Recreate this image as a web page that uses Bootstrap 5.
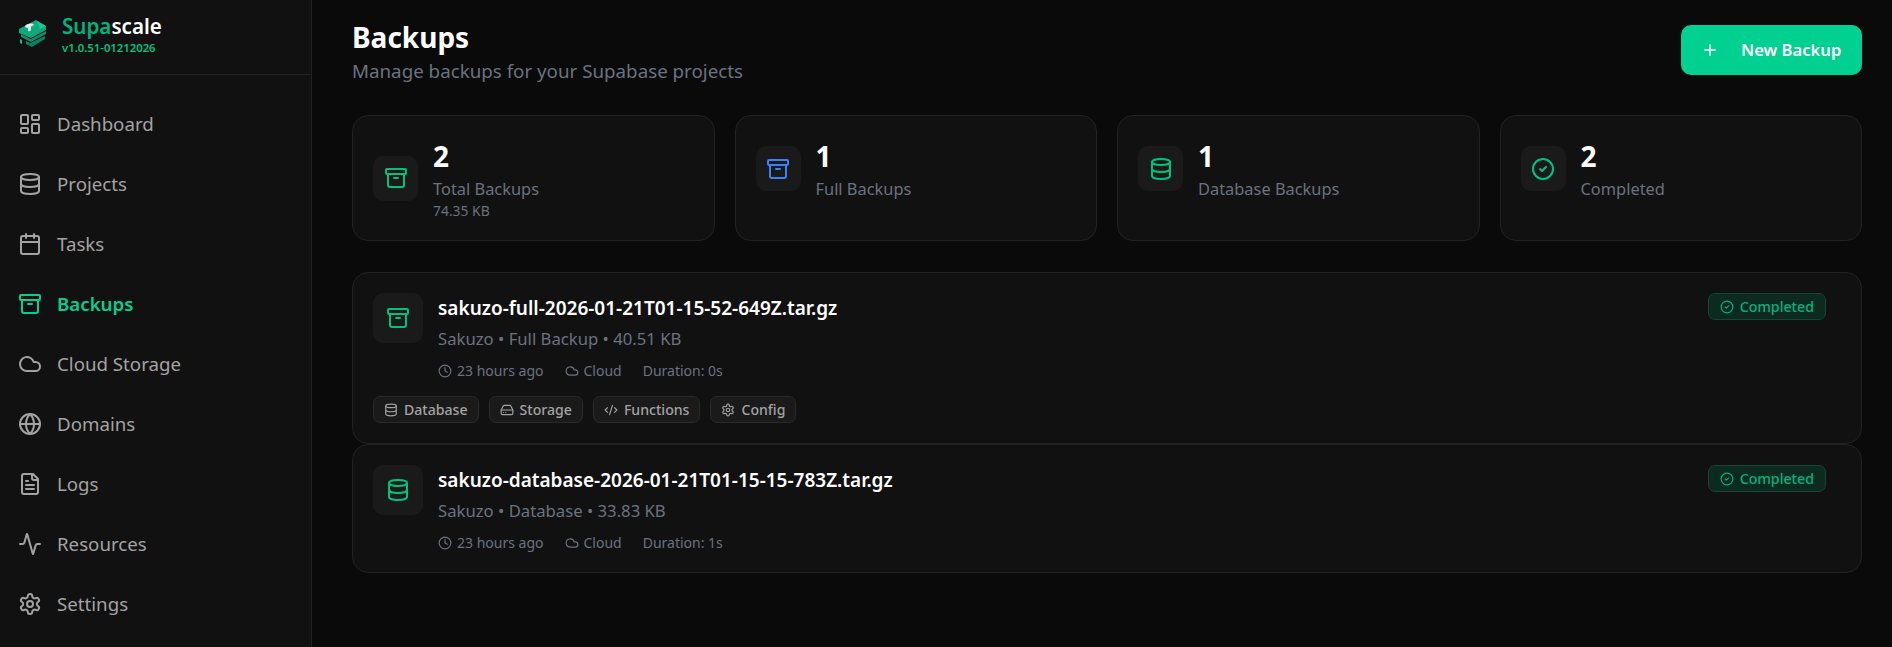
<!DOCTYPE html>
<html lang="en">
<head>
<meta charset="utf-8">
<title>Backups</title>
<link href="https://cdn.jsdelivr.net/npm/bootstrap@5.3.0/dist/css/bootstrap.min.css" rel="stylesheet">
<style>
html,body{height:100%}
body{background:#0a0a0a;color:#fff;font-family:"Noto Sans","Open Sans",sans-serif;overflow:hidden}
svg.ic{fill:none;stroke:currentColor;stroke-width:2;stroke-linecap:round;stroke-linejoin:round;flex:none}
.shell{height:647px}
.side{width:312px;flex:none;background:#111;border-right:1px solid #222}
.brand{height:75px;border-bottom:1px solid #222;padding:0 17px 6px 18px;gap:15px}
.brand-name{font-size:20.6px;font-weight:600;line-height:26px;color:#fff}
.brand-name span{color:#00b37e}
.brand-ver{font-size:11.3px;font-weight:600;line-height:14px;color:#00c27f;margin-top:2px}
.side-nav{padding-top:19px}
.side-link{height:60px;padding:0 0 0 18px;gap:15px;color:#a3a3a3;font-size:18.7px}
.side-link svg{width:24px;height:24px}
.side-link.on{color:#00d090;font-weight:600}
.page{padding:19px 30px 0 40px;min-width:0}
.ttl{font-size:28px;font-weight:700;line-height:36px;margin:0 0 3px}
.sub{font-size:18.75px;line-height:26px;color:#6b7280;margin:0}
.new-btn{width:181px;height:50px;margin-top:6px;background:#00d090;color:#fff;border:0;border-radius:10px;font-size:16.6px;font-weight:600;gap:22px;padding:0 0 0 20px}
.new-btn svg{width:18px;height:18px}
.new-btn:hover{background:#00d090;color:#fff}
.stats{--bs-gutter-x:20px;margin-top:31px}
.panel{background:#111;border:1px solid #222;border-radius:16px}
.stat{height:126px;padding:20px;gap:15px}
.tile{width:45px;height:45px;background:#1a1a1a;border-radius:10px;flex:none}
.tile-low{margin-top:10px}
.tile svg{width:24px;height:24px}
.c-g{color:#00c27f}.c-b{color:#3b82f6}
.num{font-size:28px;font-weight:700;line-height:40px}
.lbl{font-size:16.4px;line-height:26px;color:#6b7280}
.mini{font-size:13.9px;line-height:18px;color:#6b7280}
.items{margin-top:31px}
.item{padding:20px}
.item-tile{width:50px;height:50px;background:#1a1a1a;border-radius:10px;flex:none}
.item-tile svg{width:24px;height:24px}
.item-head{gap:15px}
.item-name{font-size:19px;font-weight:600;line-height:30px;color:#fff}
.item-desc{font-size:16.7px;line-height:26px;color:#6b7280;margin-top:3px}
.meta{font-size:14px;line-height:19px;color:#6b7280;gap:21px;margin-top:9px}
.meta svg{width:14px;height:14px}
.meta span{gap:5px}
.status{height:27px;padding:0 11px;gap:6px;margin-right:15px;background:#0d2a20;border:1px solid #134634;border-radius:7px;color:#00b37e;font-size:14.2px;font-weight:500}
.status svg{width:14px;height:14px}
.chips{gap:10px;margin-top:16px}
.chip{height:27px;padding:0 10px;gap:6px;background:#1a1a1a;border:1px solid #2a2a2a;border-radius:7px;color:#a3a3a3;font-size:14.1px;font-weight:500}
.chip svg{width:14px;height:14px}
</style>
</head>
<body>
<svg width="0" height="0" class="d-none" aria-hidden="true">
<defs>
<symbol id="i-dash" viewBox="0 0 24 24"><rect x="3" y="3" width="7" height="9" rx="1"/><rect x="14" y="3" width="7" height="5" rx="1"/><rect x="14" y="12" width="7" height="9" rx="1"/><rect x="3" y="16" width="7" height="5" rx="1"/></symbol>
<symbol id="i-db" viewBox="0 0 24 24"><ellipse cx="12" cy="5" rx="9" ry="3"/><path d="M3 5v14a9 3 0 0 0 18 0V5"/><path d="M3 12a9 3 0 0 0 18 0"/></symbol>
<symbol id="i-cal" viewBox="0 0 24 24"><path d="M8 2v4"/><path d="M16 2v4"/><rect x="3" y="4" width="18" height="18" rx="2"/><path d="M3 10h18"/></symbol>
<symbol id="i-arc" viewBox="0 0 24 24"><rect x="2" y="3" width="20" height="5" rx="1"/><path d="M4 8v11a2 2 0 0 0 2 2h12a2 2 0 0 0 2-2V8"/><path d="M10 12h4"/></symbol>
<symbol id="i-cloud" viewBox="0 0 24 24"><path d="M17.5 19H9a7 7 0 1 1 6.71-9h1.79a4.5 4.5 0 1 1 0 9Z"/></symbol>
<symbol id="i-globe" viewBox="0 0 24 24"><circle cx="12" cy="12" r="10"/><path d="M12 2a14.5 14.5 0 0 0 0 20 14.5 14.5 0 0 0 0-20"/><path d="M2 12h20"/></symbol>
<symbol id="i-file" viewBox="0 0 24 24"><path d="M15 2H6a2 2 0 0 0-2 2v16a2 2 0 0 0 2 2h12a2 2 0 0 0 2-2V7Z"/><path d="M14 2v4a2 2 0 0 0 2 2h4"/><path d="M10 9H8"/><path d="M16 13H8"/><path d="M16 17H8"/></symbol>
<symbol id="i-act" viewBox="0 0 24 24"><path d="M22 12h-2.48a2 2 0 0 0-1.93 1.46l-2.35 8.36a.25.25 0 0 1-.48 0L9.24 2.18a.25.25 0 0 0-.48 0l-2.35 8.36A2 2 0 0 1 4.49 12H2"/></symbol>
<symbol id="i-gear" viewBox="0 0 24 24"><path d="M12.22 2h-.44a2 2 0 0 0-2 2v.18a2 2 0 0 1-1 1.73l-.43.25a2 2 0 0 1-2 0l-.15-.08a2 2 0 0 0-2.73.73l-.22.38a2 2 0 0 0 .73 2.73l.15.1a2 2 0 0 1 1 1.72v.51a2 2 0 0 1-1 1.74l-.15.09a2 2 0 0 0-.73 2.73l.22.38a2 2 0 0 0 2.73.73l.15-.08a2 2 0 0 1 2 0l.43.25a2 2 0 0 1 1 1.73V20a2 2 0 0 0 2 2h.44a2 2 0 0 0 2-2v-.18a2 2 0 0 1 1-1.73l.43-.25a2 2 0 0 1 2 0l.15.08a2 2 0 0 0 2.73-.73l.22-.39a2 2 0 0 0-.73-2.73l-.15-.08a2 2 0 0 1-1-1.74v-.5a2 2 0 0 1 1-1.74l.15-.09a2 2 0 0 0 .73-2.73l-.22-.38a2 2 0 0 0-2.73-.73l-.15.08a2 2 0 0 1-2 0l-.43-.25a2 2 0 0 1-1-1.73V4a2 2 0 0 0-2-2z"/><circle cx="12" cy="12" r="3"/></symbol>
<symbol id="i-clock" viewBox="0 0 24 24"><circle cx="12" cy="12" r="10"/><path d="M12 6v6l4 2"/></symbol>
<symbol id="i-hd" viewBox="0 0 24 24"><path d="M22 12H2"/><path d="M5.45 5.11 2 12v6a2 2 0 0 0 2 2h16a2 2 0 0 0 2-2v-6l-3.45-6.89A2 2 0 0 0 16.76 4H7.24a2 2 0 0 0-1.79 1.11z"/><path d="M6 16h.01"/><path d="M10 16h.01"/></symbol>
<symbol id="i-code" viewBox="0 0 24 24"><path d="m18 16 4-4-4-4"/><path d="m6 8-4 4 4 4"/><path d="m14.5 4-5 16"/></symbol>
<symbol id="i-check" viewBox="0 0 24 24"><circle cx="12" cy="12" r="10"/><path d="m9 12 2 2 4-4"/></symbol>
<symbol id="i-plus" viewBox="0 0 24 24"><path d="M5 12h14"/><path d="M12 5v14"/></symbol>
</defs>
</svg>
<div class="shell d-flex">
  <aside class="side d-flex flex-column">
    <div class="brand d-flex align-items-center">
      <svg width="29" height="30" viewBox="0 0 29 30" aria-hidden="true">
        <path d="M1 10 18 1l10 6v4L13 19 1 14z" fill="#12a87e"/>
        <path d="M19 2l9 5-6 3z" fill="#17c996"/>
        <path d="M7 7c3-3 8-3 9-1l-3 1.500v4l-3 1v-4l-2 .5z" fill="#dff5ec"/>
        <path d="M3 15l10 5 15-8v3l-15 8-10-5z" fill="#0c8f6a"/>
        <path d="M12 24l15-7v3l-13 8-6-3v-3z" fill="#0b7f5e"/>
        <path d="M2 20l2 1v4l-2-1z" fill="#14c08f"/>
      </svg>
      <div>
        <div class="brand-name"><span>Supa</span>scale</div>
        <div class="brand-ver">v1.0.51-01212026</div>
      </div>
    </div>
    <nav class="side-nav nav flex-column">
      <a class="side-link nav-link d-flex align-items-center" href="#"><svg class="ic"><use href="#i-dash"/></svg>Dashboard</a>
      <a class="side-link nav-link d-flex align-items-center" href="#"><svg class="ic"><use href="#i-db"/></svg>Projects</a>
      <a class="side-link nav-link d-flex align-items-center" href="#"><svg class="ic"><use href="#i-cal"/></svg>Tasks</a>
      <a class="side-link nav-link on d-flex align-items-center" href="#"><svg class="ic"><use href="#i-arc"/></svg>Backups</a>
      <a class="side-link nav-link d-flex align-items-center" href="#"><svg class="ic"><use href="#i-cloud"/></svg>Cloud Storage</a>
      <a class="side-link nav-link d-flex align-items-center" href="#"><svg class="ic"><use href="#i-globe"/></svg>Domains</a>
      <a class="side-link nav-link d-flex align-items-center" href="#"><svg class="ic"><use href="#i-file"/></svg>Logs</a>
      <a class="side-link nav-link d-flex align-items-center" href="#"><svg class="ic"><use href="#i-act"/></svg>Resources</a>
      <a class="side-link nav-link d-flex align-items-center" href="#"><svg class="ic"><use href="#i-gear"/></svg>Settings</a>
    </nav>
  </aside>
  <main class="page flex-grow-1">
    <div class="d-flex justify-content-between align-items-start">
      <div>
        <h1 class="ttl">Backups</h1>
        <p class="sub">Manage backups for your Supabase projects</p>
      </div>
      <button class="new-btn btn d-flex align-items-center" type="button"><svg class="ic"><use href="#i-plus"/></svg>New Backup</button>
    </div>
    <div class="stats row row-cols-4">
      <div class="col"><div class="panel stat d-flex align-items-center">
        <div class="tile d-flex align-items-center justify-content-center c-g"><svg class="ic"><use href="#i-arc"/></svg></div>
        <div><div class="num">2</div><div class="lbl">Total Backups</div><div class="mini">74.35 KB</div></div>
      </div></div>
      <div class="col"><div class="panel stat d-flex align-items-start">
        <div class="tile tile-low d-flex align-items-center justify-content-center c-b"><svg class="ic"><use href="#i-arc"/></svg></div>
        <div><div class="num">1</div><div class="lbl">Full Backups</div></div>
      </div></div>
      <div class="col"><div class="panel stat d-flex align-items-start">
        <div class="tile tile-low d-flex align-items-center justify-content-center c-g"><svg class="ic"><use href="#i-db"/></svg></div>
        <div><div class="num">1</div><div class="lbl">Database Backups</div></div>
      </div></div>
      <div class="col"><div class="panel stat d-flex align-items-start">
        <div class="tile tile-low d-flex align-items-center justify-content-center c-g"><svg class="ic"><use href="#i-check"/></svg></div>
        <div><div class="num">2</div><div class="lbl">Completed</div></div>
      </div></div>
    </div>
    <div class="items d-flex flex-column">
      <div class="panel item">
        <div class="d-flex justify-content-between align-items-start">
          <div class="item-head d-flex">
            <div class="item-tile d-flex align-items-center justify-content-center c-g"><svg class="ic"><use href="#i-arc"/></svg></div>
            <div>
              <div class="item-name">sakuzo-full-2026-01-21T01-15-52-649Z.tar.gz</div>
              <div class="item-desc">Sakuzo • Full Backup • 40.51 KB</div>
              <div class="meta d-flex"><span class="d-flex align-items-center"><svg class="ic"><use href="#i-clock"/></svg>23 hours ago</span><span class="d-flex align-items-center"><svg class="ic"><use href="#i-cloud"/></svg>Cloud</span><span>Duration: 0s</span></div>
            </div>
          </div>
          <div class="status d-flex align-items-center"><svg class="ic"><use href="#i-check"/></svg>Completed</div>
        </div>
        <div class="chips d-flex">
          <div class="chip d-flex align-items-center"><svg class="ic"><use href="#i-db"/></svg>Database</div>
          <div class="chip d-flex align-items-center"><svg class="ic"><use href="#i-hd"/></svg>Storage</div>
          <div class="chip d-flex align-items-center"><svg class="ic"><use href="#i-code"/></svg>Functions</div>
          <div class="chip d-flex align-items-center"><svg class="ic"><use href="#i-gear"/></svg>Config</div>
        </div>
      </div>
      <div class="panel item">
        <div class="d-flex justify-content-between align-items-start">
          <div class="item-head d-flex">
            <div class="item-tile d-flex align-items-center justify-content-center c-g"><svg class="ic"><use href="#i-db"/></svg></div>
            <div>
              <div class="item-name">sakuzo-database-2026-01-21T01-15-15-783Z.tar.gz</div>
              <div class="item-desc">Sakuzo • Database • 33.83 KB</div>
              <div class="meta d-flex"><span class="d-flex align-items-center"><svg class="ic"><use href="#i-clock"/></svg>23 hours ago</span><span class="d-flex align-items-center"><svg class="ic"><use href="#i-cloud"/></svg>Cloud</span><span>Duration: 1s</span></div>
            </div>
          </div>
          <div class="status d-flex align-items-center"><svg class="ic"><use href="#i-check"/></svg>Completed</div>
        </div>
      </div>
    </div>
  </main>
</div>
<script src="https://cdn.jsdelivr.net/npm/bootstrap@5.3.0/dist/js/bootstrap.bundle.min.js"></script>
</body>
</html>
